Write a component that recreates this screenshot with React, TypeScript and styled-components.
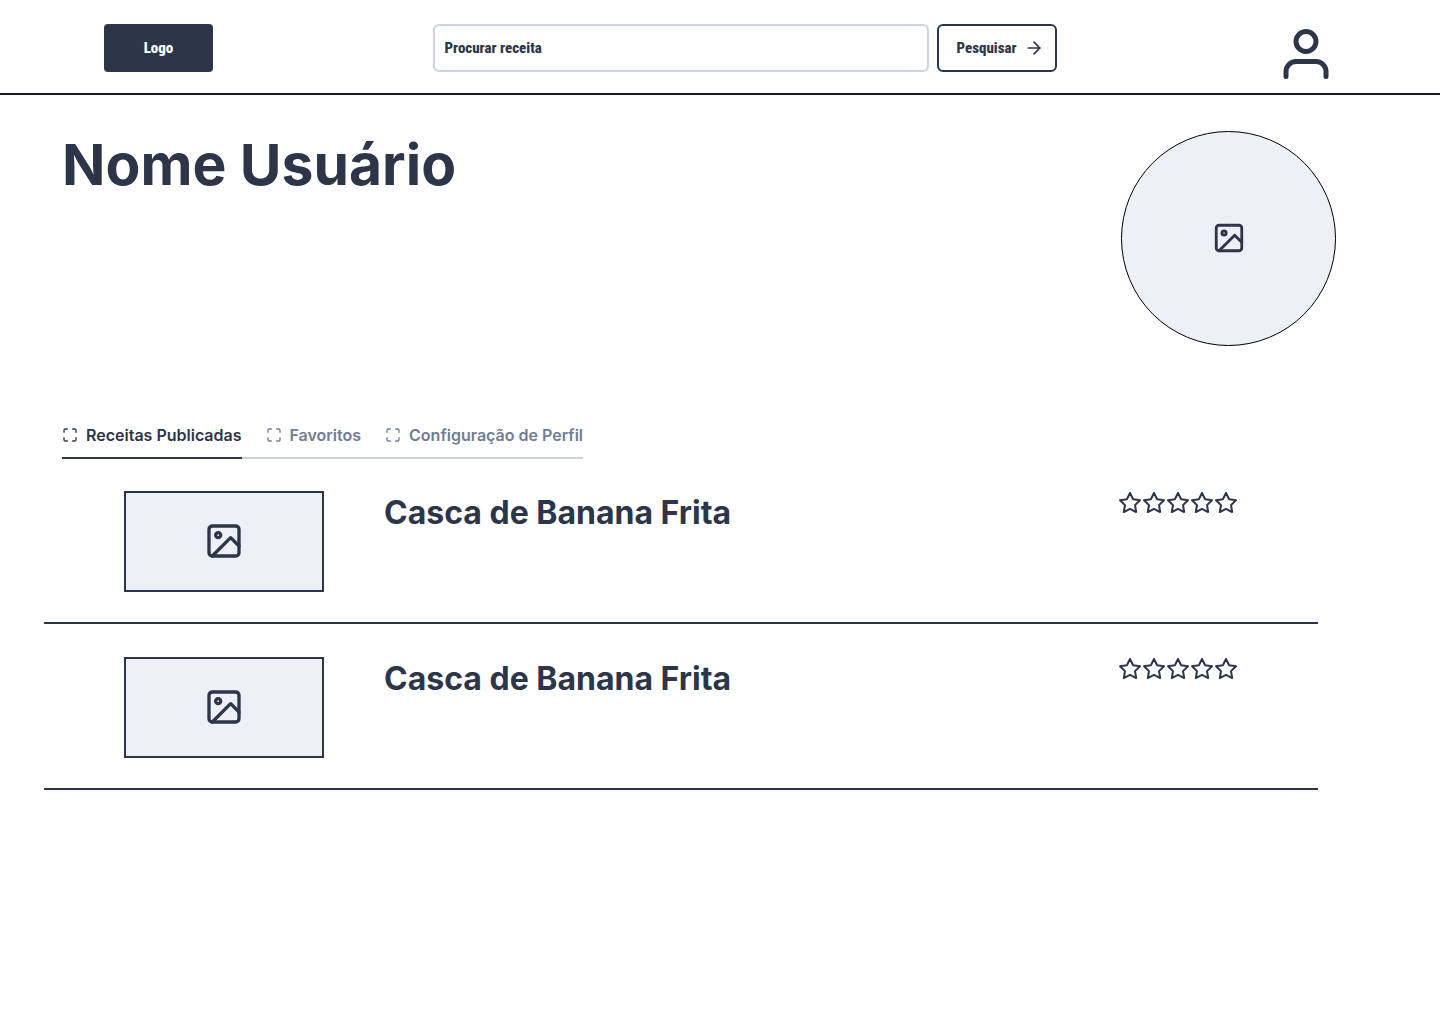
import React from "react";
import styled, { createGlobalStyle } from "styled-components";
import { FiArrowRight, FiImage, FiMaximize, FiStar, FiUser } from "react-icons/fi";

const ink = "#2d3648";
const mist = "#edf0f7";
const line = "#cbd2e0";
const muted = "#717d96";

const GlobalStyle = createGlobalStyle`
  *, *::before, *::after { box-sizing: border-box; }
  body {
    margin: 0;
    background: #fff;
    color: ${ink};
    font-family: Inter, "Liberation Sans", sans-serif;
  }
  h1, h2, ul { margin: 0; padding: 0; }
  svg { display: block; flex: none; }
`;

const compactText = `
  font-family: "Roboto Condensed", Roboto, "Liberation Sans", sans-serif;
  font-size: 15px;
  font-weight: 800;
  line-height: 24px;
`;

const Header = styled.header`
  display: flex;
  justify-content: space-between;
  align-items: flex-start;
  gap: 24px;
  padding: 24px 104px 9px;
  border-bottom: 2px solid #1a1a2b;
`;

const Logo = styled.a`
  ${compactText}
  display: flex;
  align-items: center;
  justify-content: center;
  width: 109px;
  height: 48px;
  border-radius: 4px;
  background: ${ink};
  color: #fff;
  text-decoration: none;
`;

const SearchForm = styled.form`
  display: flex;
  flex: 0 1 624px;
  gap: 8px;
`;

const SearchInput = styled.input`
  ${compactText}
  flex: 1;
  min-width: 0;
  height: 48px;
  padding: 0 10px;
  border: 2px solid ${line};
  border-radius: 6px;
  background: #fff;
  color: ${ink};
  &::placeholder { color: ${ink}; opacity: 1; }
`;

const SearchButton = styled.button`
  ${compactText}
  display: flex;
  flex: none;
  align-items: center;
  justify-content: space-between;
  width: 120px;
  height: 48px;
  padding: 0 11px 0 18px;
  border: 2px solid ${ink};
  border-radius: 6px;
  background: #fff;
  color: ${ink};
`;

const IconButton = styled.button`
  padding: 0;
  border: 0;
  background: none;
  color: ${ink};
`;

const Profile = styled.section`
  display: flex;
  justify-content: space-between;
  align-items: flex-start;
  padding: 36px 104px 0 62px;
`;

const UserName = styled.h1`
  font-size: 57px;
  font-weight: 700;
  line-height: 68px;
`;

const ImagePlaceholder = styled.div`
  display: flex;
  flex: none;
  align-items: center;
  justify-content: center;
  padding-bottom: 2px;
  background: ${mist};
`;

const Avatar = styled(ImagePlaceholder)`
  width: 215px;
  height: 215px;
  border: 1px solid #000;
  border-radius: 50%;
`;

const Tabs = styled.div`
  display: flex;
  width: fit-content;
  margin: 77px 62px 0;
  box-shadow: inset 0 -2px ${line};
`;

const Tab = styled.button<{ $active?: boolean }>`
  display: flex;
  align-items: center;
  gap: 8px;
  padding: 0 0 10px;
  border: 0;
  border-bottom: 2px solid ${(p) => (p.$active ? ink : "transparent")};
  background: none;
  color: ${(p) => (p.$active ? ink : muted)};
  font-family: inherit;
  font-size: 16px;
  font-weight: 600;
  line-height: 24px;
  & + & { margin-left: 24px; }
`;

const RecipeList = styled.ul`
  margin: 0 122px 0 44px;
  list-style: none;
`;

const Recipe = styled.li`
  display: flex;
  align-items: flex-start;
  padding: 32px 80px 30px;
  border-bottom: 2px solid ${ink};
  & + & { padding-top: 33px; }
`;

const Thumb = styled(ImagePlaceholder)`
  width: 200px;
  height: 101px;
  border: 2px solid ${ink};
`;

const RecipeTitle = styled.h2`
  flex: 1;
  margin-left: 60px;
  font-size: 32px;
  font-weight: 700;
  line-height: 44px;
`;

const Stars = styled.div`
  display: flex;
`;

const tabs = ["Receitas Publicadas", "Favoritos", "Configuração de Perfil"];
const recipes = [
  { id: 1, title: "Casca de Banana Frita" },
  { id: 2, title: "Casca de Banana Frita" },
];

export default function App() {
  const [active, setActive] = React.useState(0);
  return (
    <>
      <GlobalStyle />
      <Header>
        <Logo href="#">Logo</Logo>
        <SearchForm role="search" onSubmit={(e) => e.preventDefault()}>
          <SearchInput type="text" aria-label="Procurar receita" placeholder="Procurar receita" />
          <SearchButton type="submit">
            Pesquisar
            <FiArrowRight size={20} />
          </SearchButton>
        </SearchForm>
        <IconButton type="button" aria-label="Perfil">
          <FiUser size={60} />
        </IconButton>
      </Header>
      <main>
        <Profile>
          <UserName>Nome Usuário</UserName>
          <Avatar>
            <FiImage size={34} />
          </Avatar>
        </Profile>
        <Tabs role="tablist">
          {tabs.map((label, i) => (
            <Tab
              key={label}
              type="button"
              role="tab"
              aria-selected={i === active}
              $active={i === active}
              onClick={() => setActive(i)}
            >
              <FiMaximize size={16} />
              {label}
            </Tab>
          ))}
        </Tabs>
        <RecipeList>
          {recipes.map((recipe) => (
            <Recipe key={recipe.id}>
              <Thumb>
                <FiImage size={40} />
              </Thumb>
              <RecipeTitle>{recipe.title}</RecipeTitle>
              <Stars role="img" aria-label="Avaliação">
                {[0, 1, 2, 3, 4].map((n) => (
                  <FiStar key={n} size={24} />
                ))}
              </Stars>
            </Recipe>
          ))}
        </RecipeList>
      </main>
    </>
  );
}
